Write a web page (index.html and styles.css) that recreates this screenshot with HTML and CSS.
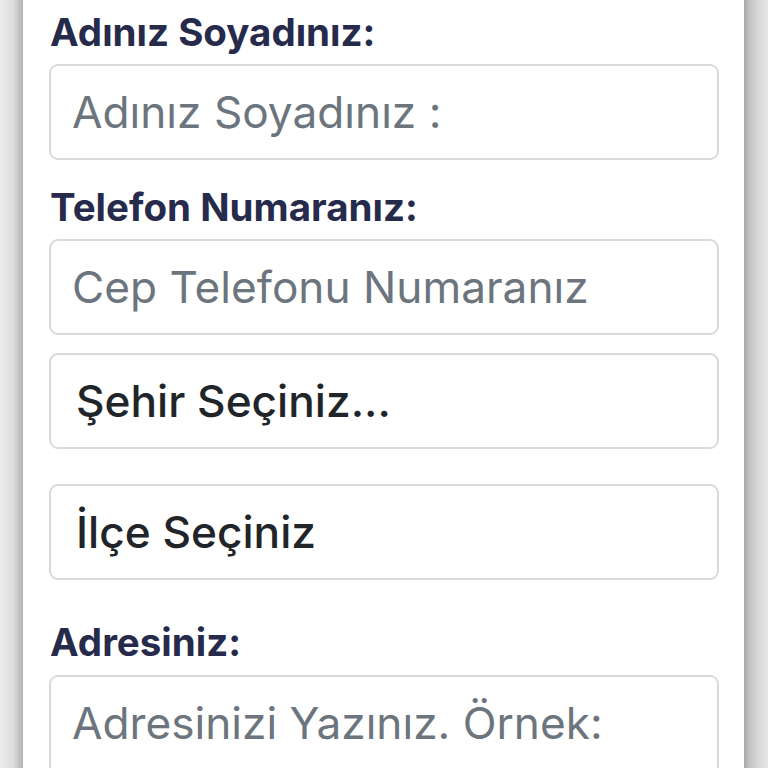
FILE: index.html
```html
<!DOCTYPE html>
<html lang="tr">
<head>
<meta charset="utf-8">
<title>Form</title>
<link rel="stylesheet" href="styles.css">
</head>
<body>
<div class="frame">
  <div class="edge edge-left"></div>
  <main class="card">
    <form class="form">
      <label class="label label-first" for="ad">Adınız Soyadınız:</label>
      <input class="field" id="ad" type="text" placeholder="Adınız Soyadınız :">
      <label class="label" for="tel">Telefon Numaranız:</label>
      <input class="field" id="tel" type="tel" placeholder="Cep Telefonu Numaranız">
      <select class="field select select-city">
        <option>Şehir Seçiniz...</option>
      </select>
      <select class="field select select-district">
        <option>İlçe Seçiniz</option>
      </select>
      <label class="label label-address" for="adres">Adresiniz:</label>
      <textarea class="field area" id="adres" placeholder="Adresinizi Yazınız. Örnek:"></textarea>
    </form>
  </main>
  <div class="edge edge-right"></div>
</div>
</body>
</html>
```

FILE: styles.css
```css
html, body {
  margin: 0;
  padding: 0;
  background: #ffffff;
  height: 100%;
  overflow: hidden;
}

.frame {
  display: flex;
  height: 768px;
  overflow: hidden;
}

.edge {
  flex: 0 0 24px;
}

.edge-left {
  flex-basis: 23px;
  background: linear-gradient(to right, #ececec 0%, #dedede 55%, #c2c2c2 85%, #b3b3b3 100%);
}

.edge-right {
  flex-basis: 24px;
  background: linear-gradient(to right, #a9a9a9 0%, #c4c4c4 25%, #d9d9d9 60%, #e6e6e6 100%);
}

.card {
  flex: 1;
  background: #ffffff;
  padding: 0 25px 0 26px;
  overflow: hidden;
}

.form {
  display: flex;
  flex-direction: column;
}

.label {
  font-family: Inter, "Noto Sans", sans-serif;
  font-weight: 700;
  font-size: 38.5px;
  line-height: 46px;
  color: #262a4b;
  margin: 24px 0 9px 1px;
}

.label-first {
  margin-top: 9px;
}

.field {
  box-sizing: border-box;
  width: 100%;
  height: 96px;
  margin: 0;
  border: 2px solid #dadada;
  border-radius: 9px;
  background: #ffffff;
  font-family: Inter, "Liberation Sans", sans-serif;
  font-size: 44.2px;
  color: #212529;
  padding: 0 21px;
  -webkit-appearance: none;
  appearance: none;
  outline: none;
}

.field::placeholder {
  color: #6c757d;
  opacity: 1;
}

.select {
  padding-left: 25px;
  font-weight: 500;
}

.select-city {
  margin-top: 18px;
}

.select-district {
  margin-top: 35px;
}

.label-address {
  margin-top: 39px;
  margin-bottom: 10px;
}

.area {
  height: 93px;
  padding-top: 18px;
  resize: none;
  line-height: 56px;
  border-bottom: 0;
  border-bottom-left-radius: 0;
  border-bottom-right-radius: 0;
}
```
